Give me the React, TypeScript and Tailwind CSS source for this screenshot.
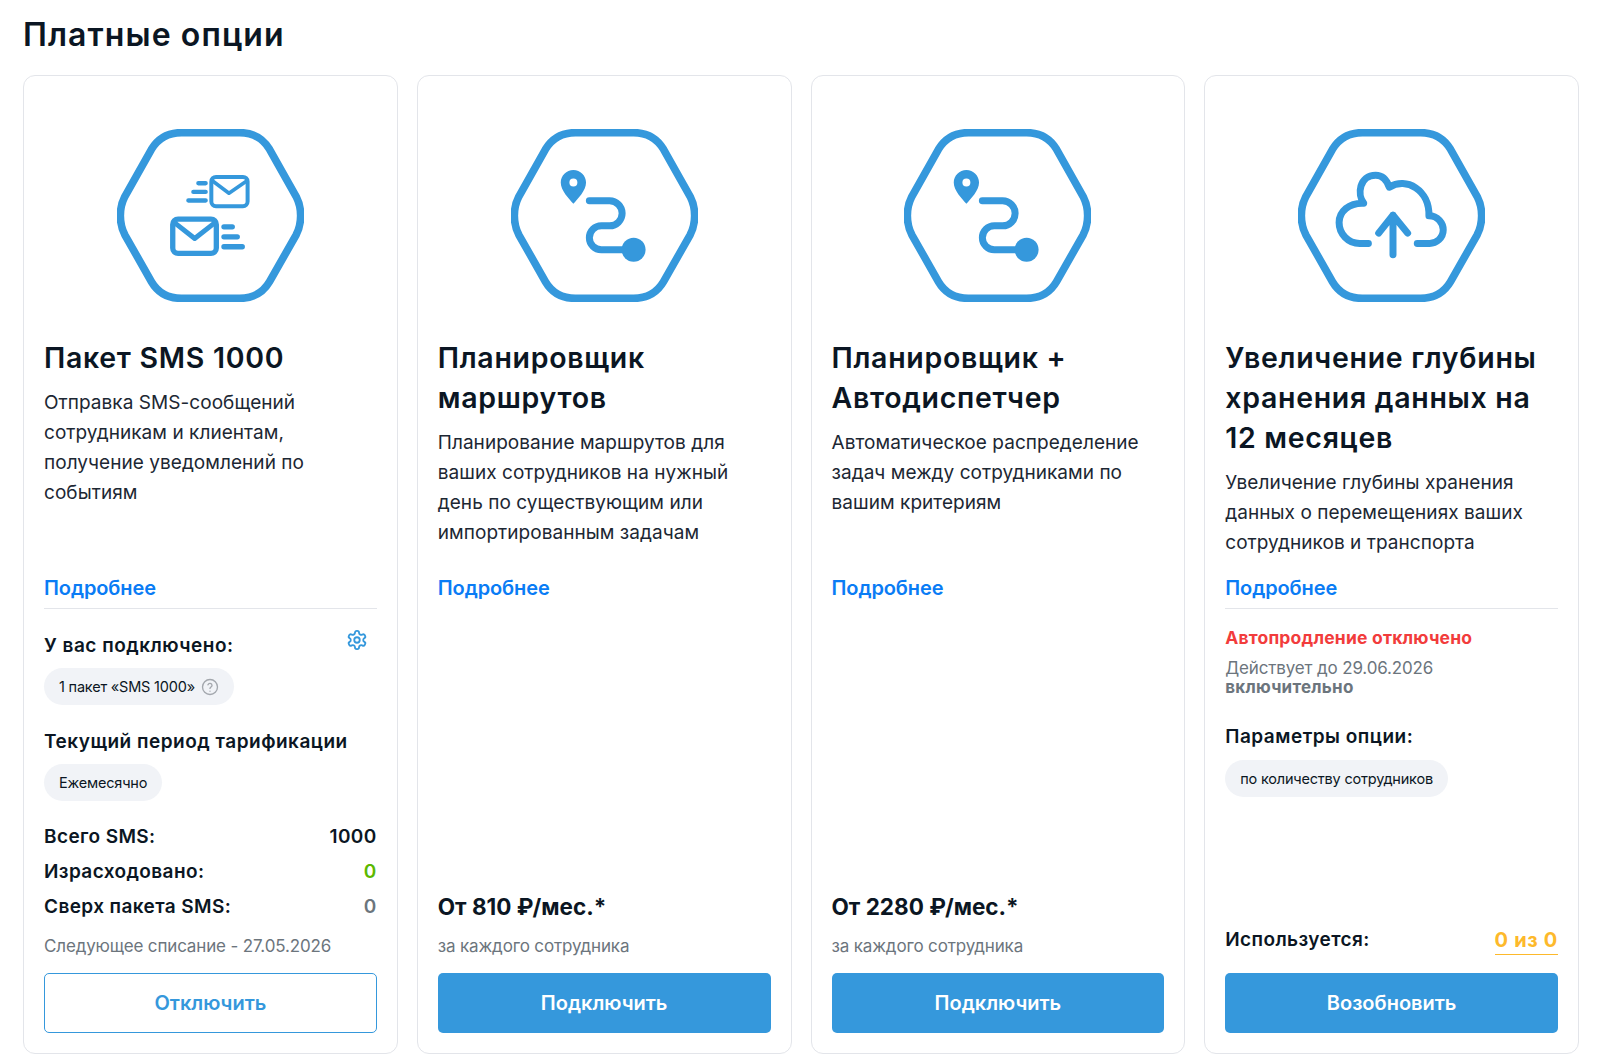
import React from "react";

const Hex = ({ children }: { children: React.ReactNode }) => (
  <svg viewBox="52 57 561 520" className="w-[187px] h-[173px] block mx-auto" fill="none" stroke="#3598dc" strokeLinecap="round" strokeLinejoin="round">
    <path strokeWidth="23" d="M245 68H420C460 68 490 85 510 118L590 260C608 295 608 340 590 375L510 516C490 550 460 566 420 566H245C205 566 175 550 155 516L75 375C57 340 57 295 75 260L155 118C175 85 205 68 245 68Z" />
    {children}
  </svg>
);

const SmsIcon = () => (
  <Hex>
    <rect x="335" y="201" width="109" height="88" rx="14" strokeWidth="12" />
    <path strokeWidth="11" d="M340 214L388 250L440 214" />
    <path strokeWidth="13" d="M296 220H318M281 246H318M266 272H318" />
    <rect x="219" y="328" width="131" height="103" rx="16" strokeWidth="16" />
    <path strokeWidth="15" d="M226 340L285 386L344 340" />
    <path strokeWidth="16" d="M373 351H398M373 381H413M373 411H428" />
  </Hex>
);

const RouteIcon = () => (
  <Hex>
    <g transform="translate(-10 0)">
      <path fill="#3598dc" stroke="none" fillRule="evenodd" d="M249 180C228 180 211 197 211 218C211 242 235 266 249 282C263 266 287 242 287 218C287 197 270 180 249 180ZM249 206A12 12 0 1 1 249 230A12 12 0 1 1 249 206Z" />
      <path strokeWidth="21" d="M297 273H358A37.5 37.5 0 0 1 358 348H333A36 36 0 0 0 333 420H430" />
      <circle cx="430" cy="420" r="36" fill="#3598dc" stroke="none" />
    </g>
  </Hex>
);

const CloudIcon = () => (
  <Hex>
    <g transform="translate(-3 0)" strokeWidth="21">
      <path d="M266 401H240C205 401 178 372 178 338C178 305 208 278 252 280C232 255 238 196 288 196C308 196 322 212 329 232C380 200 450 240 448 318C475 318 491 340 491 360C491 385 470 401 450 401H413" />
      <path d="M340 435V316M297 370L340 316L384 370" />
    </g>
  </Hex>
);

const Chip = ({ children }: { children: React.ReactNode }) => (
  <div className="inline-flex items-center h-[37px] px-[15px] rounded-full bg-[#f1f3f7] text-[14.5px] tracking-[-0.2px] text-[#0b1623] w-fit">{children}</div>
);

const Label = ({ children }: { children: React.ReactNode }) => (
  <div className="text-[19px] leading-[24px] font-semibold tracking-[0.5px] text-[#0b1623]">{children}</div>
);

const Row = ({ label, value, color }: { label: string; value: string; color: string }) => (
  <div className="flex justify-between h-[35px] items-center text-[19px] font-semibold tracking-[0.4px] text-[#0b1623]">
    <span>{label}</span>
    <span className={color}>{value}</span>
  </div>
);

const Primary = ({ children }: { children: React.ReactNode }) => (
  <button className="h-[60px] w-full rounded-[5px] bg-[#3598dc] text-white text-[20px] font-semibold">{children}</button>
);

const Card = ({ icon, title, text, bottom, divider }: { icon: React.ReactNode; title: React.ReactNode; text: React.ReactNode; bottom: React.ReactNode; divider?: boolean }) => (
  <div className="flex flex-col border border-[#e3e5ea] rounded-[12px] px-5 pb-5 pt-[53px] bg-white">
    {icon}
    <div className="flex flex-col h-[300px] pt-[36px]">
      <h3 className="text-[28.5px] leading-[40px] font-semibold tracking-[0.7px] text-[#0b1623]">{title}</h3>
      <p className="mt-[10px] text-[19px] leading-[30px] tracking-[0.05px] text-[#1c2733]">{text}</p>
      <a className="mt-auto text-[20px] leading-[28px] font-semibold tracking-[-0.1px] text-[#0a7cf5]">Подробнее</a>
    </div>
    <div className={`mt-[6px] h-px ${divider ? "bg-[#e3e5ea]" : "bg-transparent"}`} />
    <div className="flex flex-col flex-1 justify-between">{bottom}</div>
  </div>
);

const Price = ({ value }: { value: string }) => (
  <div className="mt-auto flex flex-col">
    <div className="text-[22.5px] leading-[30px] font-bold text-[#0b1623]">{value}</div>
    <div className="mt-[12px] mb-[15px] text-[17px] leading-[24px] tracking-[-0.15px] text-[#6c757d]">за каждого сотрудника</div>
    <Primary>Подключить</Primary>
  </div>
);

export default function App() {
  return (
    <div className="min-h-[1064px] bg-white px-[23px] pt-[15px] font-['Inter','Noto_Sans',sans-serif]">
      <h2 className="text-[32px] leading-[40px] font-semibold text-[#0b1623] tracking-[1.1px]">Платные опции</h2>
      <div className="mt-[20px] grid grid-cols-4 gap-x-[19px] w-[1556px] h-[979px]">
        <Card
          icon={<SmsIcon />}
          title="Пакет SMS 1000"
          text={<>Отправка SMS-сообщений<br />сотрудникам и клиентам,<br />получение уведомлений по<br />событиям</>}
          divider
          bottom={
            <div className="flex flex-col flex-1">
              <div className="mt-[25px] flex justify-between items-start">
                <Label>У вас подключено:</Label>
                <svg viewBox="0 0 24 24" className="w-[22px] h-[22px] mr-[9px] -mt-[5px]" fill="none" stroke="#3598dc" strokeWidth="2" strokeLinecap="round" strokeLinejoin="round">
                  <path d="M12.22 2h-.44a2 2 0 0 0-2 2v.18a2 2 0 0 1-1 1.73l-.43.25a2 2 0 0 1-2 0l-.15-.08a2 2 0 0 0-2.73.73l-.22.38a2 2 0 0 0 .73 2.73l.15.1a2 2 0 0 1 1 1.72v.51a2 2 0 0 1-1 1.74l-.15.09a2 2 0 0 0-.73 2.73l.22.38a2 2 0 0 0 2.73.73l.15-.08a2 2 0 0 1 2 0l.43.25a2 2 0 0 1 1 1.73V20a2 2 0 0 0 2 2h.44a2 2 0 0 0 2-2v-.18a2 2 0 0 1 1-1.73l.43-.25a2 2 0 0 1 2 0l.15.08a2 2 0 0 0 2.73-.73l.22-.39a2 2 0 0 0-.73-2.73l-.15-.08a2 2 0 0 1-1-1.74v-.5a2 2 0 0 1 1-1.74l.15-.09a2 2 0 0 0 .73-2.73l-.22-.38a2 2 0 0 0-2.73-.73l-.15.08a2 2 0 0 1-2 0l-.43-.25a2 2 0 0 1-1-1.73V4a2 2 0 0 0-2-2z" />
                  <circle cx="12" cy="12" r="3" />
                </svg>
              </div>
              <div className="mt-[10px]">
                <Chip>
                  1 пакет «SMS 1000»
                  <svg viewBox="0 0 24 24" className="w-[18px] h-[18px] ml-[6px]" fill="none" stroke="#a3a7ad" strokeWidth="1.8" strokeLinecap="round">
                    <circle cx="12" cy="12" r="10" />
                    <path d="M9.3 9a2.8 2.8 0 0 1 5.4.9c0 1.9-2.7 2.4-2.7 4" />
                    <path d="M12 17.5h.01" />
                  </svg>
                </Chip>
              </div>
              <div className="mt-[25px]"><Label>Текущий период тарификации</Label></div>
              <div className="mt-[10px]"><Chip>Ежемесячно</Chip></div>
              <div className="mt-auto flex flex-col">
                <Row label="Всего SMS:" value="1000" color="text-[#0b1623]" />
                <Row label="Израсходовано:" value="0" color="text-[#5cb800]" />
                <Row label="Сверх пакета SMS:" value="0" color="text-[#6c757d]" />
              </div>
              <div className="mt-[9px] mb-[15px] text-[17px] leading-[24px] tracking-[-0.15px] text-[#6c757d]">Следующее списание - 27.05.2026</div>
              <button className="h-[60px] w-full rounded-[5px] border border-[#3598dc] text-[#3598dc] text-[20px] font-semibold">Отключить</button>
            </div>
          }
        />
        <Card
          icon={<RouteIcon />}
          title={<>Планировщик<br />маршрутов</>}
          text={<>Планирование маршрутов для<br />ваших сотрудников на нужный<br />день по существующим или<br />импортированным задачам</>}
          bottom={<Price value="От 810 ₽/мес.*" />}
        />
        <Card
          icon={<RouteIcon />}
          title={<>Планировщик +<br />Автодиспетчер</>}
          text={<>Автоматическое распределение<br />задач между сотрудниками по<br />вашим критериям</>}
          bottom={<Price value="От 2280 ₽/мес.*" />}
        />
        <Card
          icon={<CloudIcon />}
          title={<>Увеличение глубины<br />хранения данных на<br />12 месяцев</>}
          text={<>Увеличение глубины хранения<br />данных о перемещениях ваших<br />сотрудников и транспорта</>}
          divider
          bottom={
            <div className="flex flex-col flex-1">
              <div className="mt-[17px] text-[17.5px] leading-[24px] font-bold tracking-[0.2px] text-[#f23c3c]">Автопродление отключено</div>
              <div className="mt-[9px] text-[17px] leading-[19px] tracking-[-0.15px] text-[#6c757d]">Действует до 29.06.2026<br /><b className="font-bold tracking-[0.25px]">включительно</b></div>
              <div className="mt-[28px]"><Label>Параметры опции:</Label></div>
              <div className="mt-[11px]"><Chip>по количеству сотрудников</Chip></div>
              <div className="mt-auto flex justify-between items-center mb-[18px]">
                <span className="text-[19px] font-semibold tracking-[0.4px] text-[#0b1623]">Используется:</span>
                <span className="text-[20px] leading-[28px] font-bold tracking-[0.7px] text-[#fdb92b] border-b border-[#fdb92b]">0 из 0</span>
              </div>
              <Primary>Возобновить</Primary>
            </div>
          }
        />
      </div>
    </div>
  );
}
